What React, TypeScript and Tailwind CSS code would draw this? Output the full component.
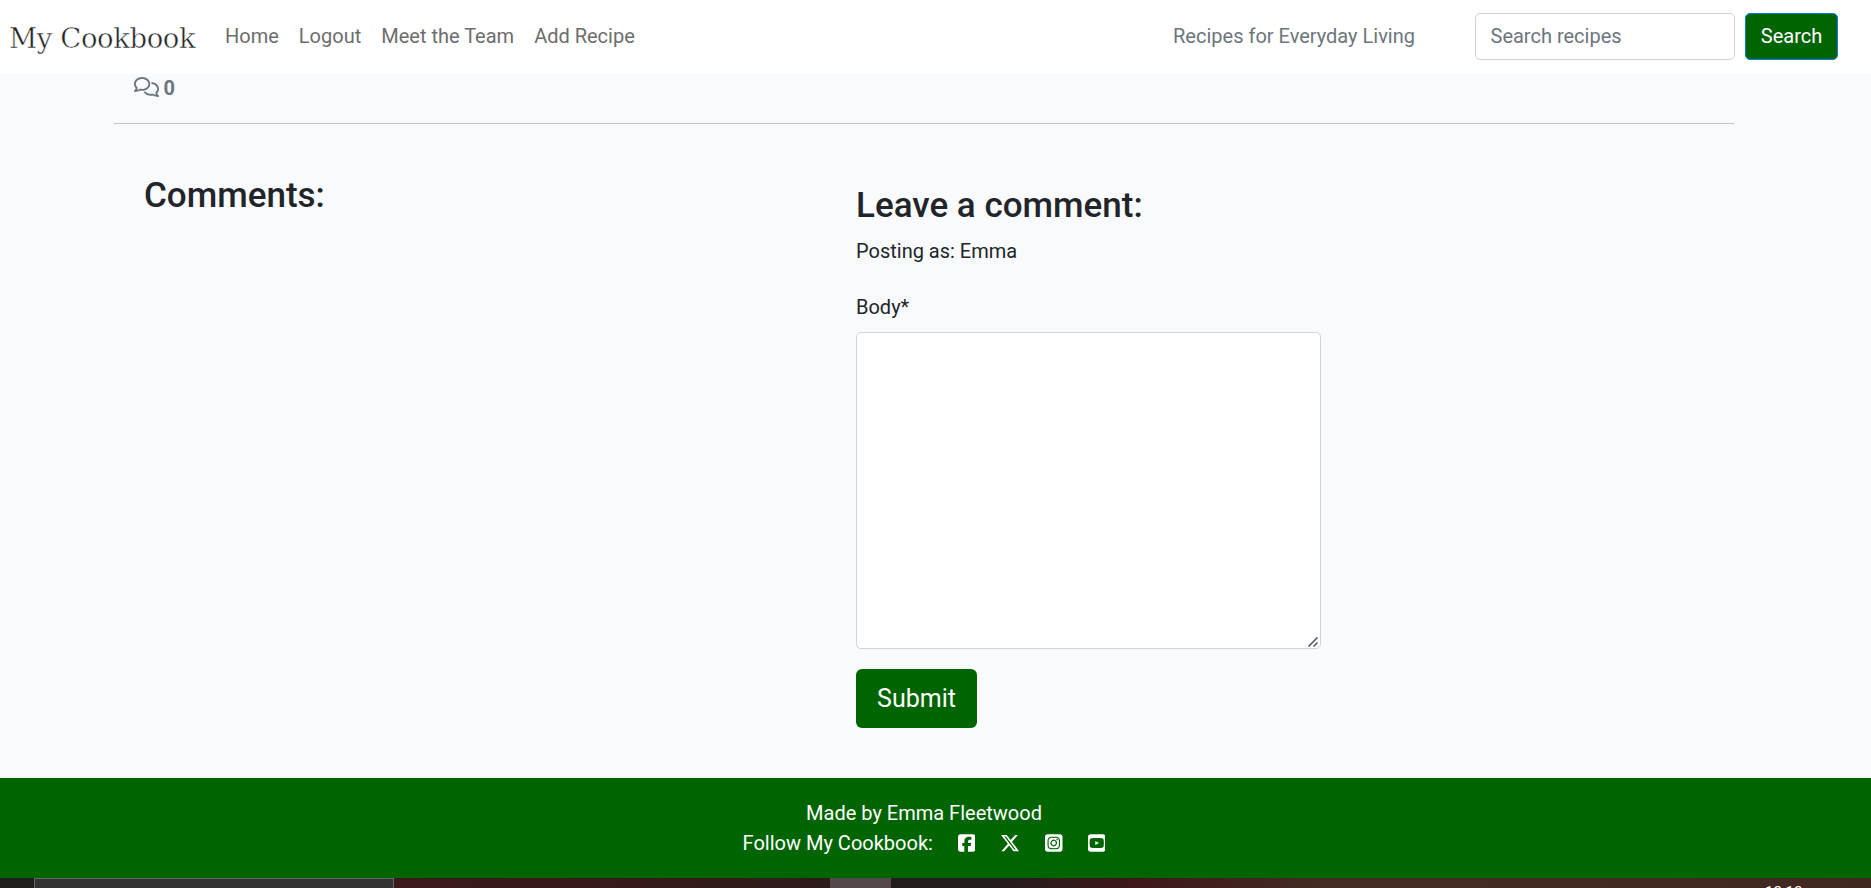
import { FaRegComments, FaSquareFacebook, FaXTwitter, FaSquareInstagram, FaSquareYoutube } from "react-icons/fa6";

const links = ["Home", "Logout", "Meet the Team", "Add Recipe"];

function Navbar() {
  return (
    <nav className="flex h-[74px] w-full items-center bg-white pr-[33px] pb-[2px] pl-[9px] text-[20px] leading-[30px] text-[#6d6d6d]">
      <a className="mr-[31px] w-[185px] pt-[3px] font-['DejaVu_Serif',serif] text-[27.5px] leading-[40px] tracking-[-0.4px] whitespace-nowrap text-[#222] [-webkit-text-stroke:0.5px_white]">
        My Cookbook
      </a>
      <div className="flex gap-5 whitespace-nowrap">
        {links.map((l) => (
          <a key={l}>{l}</a>
        ))}
      </div>
      <span className="mr-[60px] ml-auto whitespace-nowrap text-[#6c757d]">Recipes for Everyday Living</span>
      <form className="flex gap-[10px]">
        <input
          placeholder="Search recipes"
          className="h-[47px] w-[260px] rounded-[5px] border border-[#ced4da] bg-white px-[14.5px] placeholder:text-[#6c757d]"
        />
        <button type="button" className="h-[47px] w-[93px] rounded-[5px] border border-[#007bff] bg-[#006400] text-white">
          Search
        </button>
      </form>
    </nav>
  );
}

function Taskbar() {
  return (
    <div className="flex h-[10px] w-full overflow-hidden bg-[#201d1d]">
      <div className="w-[34px] shrink-0" />
      <div className="w-[360px] shrink-0 border border-b-0 border-[#666] bg-[#333]" />
      <div className="w-[436px] shrink-0 bg-linear-to-r from-[#3a191b] via-[#371a1b] to-[#2c1b1b]" />
      <div className="w-[61px] shrink-0 bg-[#544849]" />
      <div className="w-[980px] shrink-0 bg-linear-to-r from-[#432d21] via-[#432d25] to-[#402820]">
        <div className="flex h-full w-full bg-linear-to-r from-[#221c1d] from-10% via-[#3e171a] via-25% to-transparent to-45%">
          <div className="mt-[5px] ml-[874px] text-[15px] leading-[18px] whitespace-nowrap text-white">12:12</div>
        </div>
      </div>
    </div>
  );
}

export default function App() {
  return (
    <div className="flex h-[888px] w-full flex-col overflow-hidden bg-[#f9fafc] font-[Roboto,sans-serif] text-[20px] leading-[30px] text-[#212529]">
      <Navbar />
      <main className="h-[704px] w-[1734px] shrink-0 pl-[114px]">
        <div className="flex h-[49px] items-start border-b border-transparent pl-[19.5px] text-[#6c757d]">
          <FaRegComments className="mt-[3px] h-[20px] w-[25px]" />
          <strong className="-mt-px ml-[5px] font-bold">0</strong>
        </div>
        <hr className="border-t border-[#c3c6c8]" />
        <div className="flex">
          <section className="w-[742px] pt-[51px] pl-[30px]">
            <h3 className="text-[35px] leading-[42px] font-medium">Comments:</h3>
          </section>
          <section className="w-[465px] pt-[61px]">
            <h3 className="text-[35px] leading-[42px] font-medium">Leave a comment:</h3>
            <p className="mt-[9px]">Posting as: Emma</p>
            <label className="mt-[26px] block">Body*</label>
            <div className="relative mt-[10px]">
              <textarea className="block h-[317px] w-[465px] resize-none rounded-[5px] border border-[#ced4da] bg-white px-[15px] py-[7px]" />
              <svg
                viewBox="0 0 12 12"
                className="pointer-events-none absolute right-[2px] bottom-px h-[12px] w-[12px]"
                stroke="#555"
                strokeWidth="1.6"
                fill="none"
              >
                <path d="M1.5 10.5L10.5 1.5M6.5 10.5L10.5 6.5" />
              </svg>
            </div>
            <button type="button" className="mt-[20px] h-[59px] w-[121px] rounded-[6px] bg-[#006400] text-[25px] text-white">
              Submit
            </button>
          </section>
        </div>
      </main>
      <footer className="flex h-[100px] w-full shrink-0 flex-col items-center bg-[#006400] pt-[20px] pr-[23px] text-white">
        <p>Made by Emma Fleetwood</p>
        <div className="flex items-center">
          <span>Follow My Cookbook:</span>
          <FaSquareFacebook className="mb-px ml-[25px] h-[20px] w-[17.5px]" />
          <FaXTwitter className="mb-px ml-[25px] h-[20px] w-[20px]" />
          <FaSquareInstagram className="mb-px ml-[25px] h-[20px] w-[17.5px]" />
          <FaSquareYoutube className="mb-px ml-[25px] h-[20px] w-[17.5px]" />
        </div>
      </footer>
      <Taskbar />
    </div>
  );
}
